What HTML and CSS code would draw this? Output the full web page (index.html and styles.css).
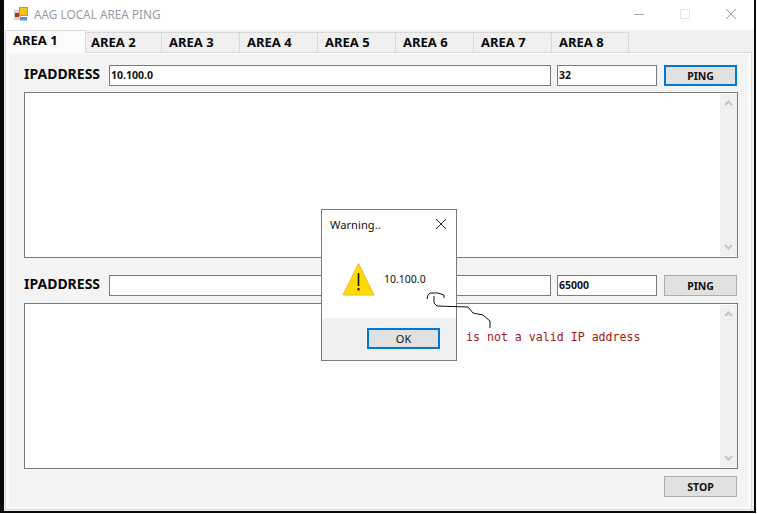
FILE: index.html
```html
<!DOCTYPE html>
<html>
<head>
<meta charset="utf-8">
<title>AAG LOCAL AREA PING</title>
<link rel="stylesheet" href="styles.css">
</head>
<body>
<div class="window">
  <header class="titlebar">
    <svg class="appicon" width="14" height="14" viewBox="0 0 14 14"><rect x="0" y="3" width="7" height="10" fill="#d4d4d4"/><rect x="1" y="6" width="4" height="4" fill="#c1271f"/><rect x="5.500" y="0.500" width="8" height="8" fill="#f2c11d" stroke="#b09a5c"/><rect x="6" y="10" width="7" height="3.500" fill="#5b8ddb"/></svg>
    <span class="title">AAG LOCAL AREA PING</span>
    <div class="controls">
      <svg width="12" height="12" viewBox="0 0 12 12"><path d="M1 6.500H11" stroke="#aaa" fill="none"/></svg>
      <svg width="12" height="12" viewBox="0 0 12 12"><rect x="1.500" y="1.500" width="9" height="9" stroke="#e4e4e4" fill="none"/></svg>
      <svg width="12" height="12" viewBox="0 0 12 12"><path d="M1 1L11 11M11 1L1 11" stroke="#999" fill="none"/></svg>
    </div>
  </header>
  <nav class="tabs">
    <div class="tab tab-active">AREA 1</div>
    <div class="tab tab-w76">AREA 2</div>
    <div class="tab">AREA 3</div>
    <div class="tab">AREA 4</div>
    <div class="tab">AREA 5</div>
    <div class="tab">AREA 6</div>
    <div class="tab">AREA 7</div>
    <div class="tab tab-w77">AREA 8</div>
  </nav>
  <main class="panel">
    <div class="panel-inner">
      <section class="group">
        <div class="row">
          <span class="label">IPADDRESS</span>
          <div class="field field-ip">10.100.0</div>
          <div class="field field-size">32</div>
          <div class="btn btn-focus">PING</div>
        </div>
        <div class="output">
          <div class="scrollbar"><svg width="9" height="6" viewBox="0 0 9 6"><path d="M1 5L4.500 1.500L8 5" stroke="#c4c4c4" stroke-width="2" fill="none"/></svg><svg width="9" height="6" viewBox="0 0 9 6"><path d="M1 1L4.500 4.500L8 1" stroke="#c4c4c4" stroke-width="2" fill="none"/></svg></div>
        </div>
      </section>
      <section class="group group-second">
        <div class="row">
          <span class="label">IPADDRESS</span>
          <div class="field field-ip"></div>
          <div class="field field-size">65000</div>
          <div class="btn">PING</div>
        </div>
        <div class="output">
          <div class="scrollbar"><svg width="9" height="6" viewBox="0 0 9 6"><path d="M1 5L4.500 1.500L8 5" stroke="#c4c4c4" stroke-width="2" fill="none"/></svg><svg width="9" height="6" viewBox="0 0 9 6"><path d="M1 1L4.500 4.500L8 1" stroke="#c4c4c4" stroke-width="2" fill="none"/></svg></div>
        </div>
      </section>
      <div class="footer"><div class="btn">STOP</div></div>
    </div>
  </main>
</div>

<div class="dialog">
  <div class="dialog-head">
    <span>Warning..</span>
    <svg width="12" height="12" viewBox="0 0 12 12"><path d="M1 1L11 11M11 1L1 11" stroke="#222" fill="none"/></svg>
  </div>
  <div class="dialog-body">
    <svg class="warn" width="33" height="34" viewBox="0 0 33 34"><path d="M16.500 1.500L32 33H1Z" fill="#ffdc00" stroke="#f0b82c" stroke-linejoin="round"/><path d="M16.500 11V24" stroke="#111" stroke-width="1.600" fill="none"/><rect x="15.500" y="26" width="2" height="2.500" fill="#111"/></svg>
    <span class="dialog-msg">10.100.0</span>
  </div>
  <div class="dialog-foot"><div class="btn btn-focus btn-ok">OK</div></div>
</div>

<svg class="scribble" width="757" height="514" viewBox="0 0 757 514"><path d="M427 299L428 295L430 293L438 293L444 295L444 298M434 296L434 303L437 306L468 307L473 313L483 315L490 321L490 328" fill="none" stroke="#111" stroke-width="1"/></svg>
<div class="note">is not a valid IP address</div>
</body>
</html>
```
FILE: styles.css
```css
* { box-sizing: border-box; }
html, body { margin: 0; padding: 0; }
body {
  width: 757px; height: 514px; overflow: hidden; position: relative;
  background: #fff;
  font-family: "Noto Sans", "Liberation Sans", sans-serif;
}
.window {
  width: 756px; height: 513px;
  border-left: 4px solid #0a0a0a;
  border-right: 2px solid #0a0a0a;
  border-bottom: 2px solid #0a0a0a;
  background: #f0f0f0;
  display: flex; flex-direction: column;
}
.titlebar {
  height: 30px; flex: none; background: #fff;
  display: flex; align-items: center; padding: 0 0 2px 10px;
}
.appicon { flex: none; }
.title { margin-left: 6px; font-size: 11.8px; color: #9a9a9a; }
.controls { margin-left: auto; display: flex; gap: 34px; padding-right: 17px; }
.tabs { display: flex; height: 22px; flex: none; padding-left: 1px; align-items: flex-end; position: relative; z-index: 1; }
.tab {
  width: 78px; height: 20px; flex: none;
  border-right: 1px solid #d9d9d9; border-top: 1px solid #d9d9d9;
  font-size: 13px; font-weight: 700; color: #0a0a0a;
  padding-left: 7px; line-height: 19px;
}
.tab-w76 { width: 76px; padding-left: 5px; }
.tab-w77 { width: 77px; }
.tab-active {
  width: 81px; height: 23px; margin-bottom: -1px;
  background: #fbfbfb; border-left: 1px solid #d9d9d9;
  line-height: 19px;
}
.panel {
  flex: 1; margin: 0 2px 1px 1px; background: #fbfbfb;
  border: 1px solid #d9d9d9;
  padding: 1px 3px 2px 3px;
  display: flex;
}
.panel-inner {
  flex: 1; background: #f4f4f4;
  padding: 11px 10px 0 15px;
  display: flex; flex-direction: column;
}
.group { display: flex; flex-direction: column; gap: 6px; }
.group-second { margin-top: 17px; gap: 7px; }
.row { display: flex; align-items: center; height: 21px; }
.label { width: 85px; flex: none; font-size: 14px; font-weight: 700; color: #0a0a0a; margin-top: -5px; }
.field {
  height: 21px; background: #fff; border: 1px solid #7a7a7a;
  font-size: 10.500px; font-weight: 700; color: #111; line-height: 19px; padding-left: 1px;
  flex: none;
}
.field-ip { width: 442px; margin-right: 6px; }
.field-size { width: 100px; margin-right: 7px; }
.btn {
  width: 73px; height: 21px; flex: none;
  background: #e1e1e1; border: 1px solid #adadad;
  font-size: 10.500px; font-weight: 700; color: #111;
  display: flex; align-items: center; justify-content: center;
}
.btn-focus { border: 2px solid #0078d7; }
.output {
  height: 166px; background: #fff; border: 1px solid #7a7a7a;
  display: flex; justify-content: flex-end;
  padding-top: 1px; padding-bottom: 1px;
}
.scrollbar {
  width: 17px; background: #f0f0f0;
  display: flex; flex-direction: column; justify-content: space-between; align-items: center;
  padding: 6px 0;
}
.footer { display: flex; justify-content: flex-end; padding-top: 7px; padding-right: 1px; }
.dialog {
  position: absolute; left: 321px; top: 209px; width: 136px; height: 152px;
  background: #fff; border: 1px solid #7a7a7a;
  display: flex; flex-direction: column;
}
.dialog-head {
  display: flex; justify-content: space-between; align-items: center;
  height: 30px; padding: 0 9px 2px 8px; font-size: 11.200px; color: #111;
}
.dialog-body { flex: 1; display: flex; align-items: center; padding: 0 0 0 20px; }
.warn { flex: none; }
.dialog-msg { margin-left: 9px; font-size: 10.500px; color: #111; margin-top: -1px; }
.dialog-foot {
  height: 42px; flex: none; background: #f0f0f0;
  display: flex; justify-content: flex-end; align-items: flex-start; padding: 10px 16px 0 0;
}
.btn-ok { font-weight: 400; font-size: 11px; }
.scribble { position: absolute; left: 0; top: 0; pointer-events: none; }
.note {
  position: absolute; left: 466px; top: 330px;
  font-family: "DejaVu Sans Mono", monospace; font-size: 11.600px; color: #a31515; white-space: nowrap;
}
```
